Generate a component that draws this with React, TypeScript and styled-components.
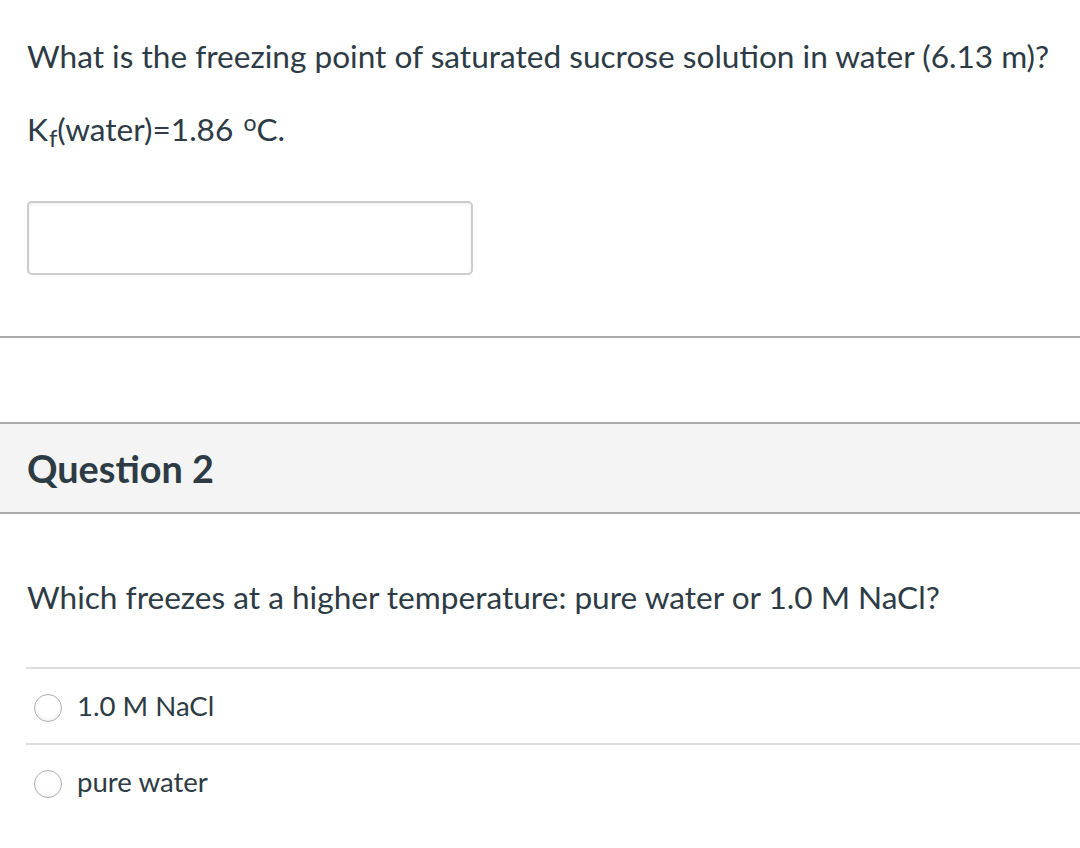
import React from 'react';
import styled, { createGlobalStyle } from 'styled-components';

const GlobalStyle = createGlobalStyle`
  html, body {
    margin: 0;
    padding: 0;
    background: #fff;
  }
  body {
    font-family: Lato, "Open Sans", sans-serif;
    color: #2d3b45;
  }
`;

const Page = styled.div`
  width: 1080px;
  padding-top: 35px;
`;

const QuestionBody = styled.div`
  padding-left: 27px;
`;

const Text = styled.p<{ $gap?: number }>`
  margin: 0 0 ${(p) => p.$gap ?? 0}px 0;
  font-size: 31.6px;
  line-height: 43px;
  white-space: nowrap;
`;

const Sub = styled.sub`
  font-size: 24px;
  vertical-align: -6px;
  line-height: 0;
  margin-left: 1px;
`;

const Deg = styled.sup`
  font-size: 23px;
  vertical-align: 10px;
  line-height: 0;
  margin-left: 2px;
`;

const AnswerInput = styled.input`
  display: block;
  box-sizing: border-box;
  width: 446px;
  height: 74px;
  margin-top: 50px;
  border: 2px solid #cccccc;
  border-radius: 5px;
  box-shadow: inset 0 2px 3px rgba(0, 0, 0, 0.06);
  background: #fff;
  outline: none;
`;

const Divider = styled.hr`
  margin: 61px 0 0 0;
  border: 0;
  height: 2px;
  background: #aaaaaa;
`;

const QuestionHeader = styled.div`
  margin-top: 84px;
  height: 88px;
  display: flex;
  align-items: center;
  padding-left: 27px;
  background: #f4f4f4;
  border-top: 2px solid #aaaaaa;
  border-bottom: 2px solid #aaaaaa;
`;

const HeaderTitle = styled.h2`
  margin: 0;
  font-size: 37.8px;
  font-weight: 700;
  color: #2d3b45;
`;

const Question2 = styled.div`
  padding-left: 27px;
  padding-top: 62px;
`;

const Answers = styled.div`
  margin-top: 48px;
  margin-left: -1px;
`;

const AnswerRow = styled.label`
  display: flex;
  align-items: center;
  height: 74px;
  border-top: 2px solid #dddddd;
  padding-left: 8px;
`;

const Radio = styled.span`
  box-sizing: border-box;
  width: 28px;
  height: 28px;
  border-radius: 50%;
  border: 1.5px solid #adadad;
  background: radial-gradient(circle at 50% 35%, #ffffff 55%, #ececec 100%);
  margin-top: 4px;
  margin-right: 15px;
`;

const AnswerText = styled.span`
  font-size: 27.6px;
  line-height: 30px;
`;

const answers = ['1.0 M NaCl', 'pure water'];

export default function App() {
  return (
    <>
      <GlobalStyle />
      <Page>
        <QuestionBody>
          <Text $gap={30}>
            What is the freezing point of saturated sucrose solution in water (6.13 m)?
          </Text>
          <Text>
            K<Sub>f</Sub>(water)=1.86 <Deg>o</Deg>C.
          </Text>
          <AnswerInput type="text" />
        </QuestionBody>
        <Divider />
        <QuestionHeader>
          <HeaderTitle>Question 2</HeaderTitle>
        </QuestionHeader>
        <Question2>
          <Text>Which freezes at a higher temperature: pure water or 1.0 M NaCl?</Text>
          <Answers>
            {answers.map((a) => (
              <AnswerRow key={a}>
                <Radio />
                <AnswerText>{a}</AnswerText>
              </AnswerRow>
            ))}
          </Answers>
        </Question2>
      </Page>
    </>
  );
}
